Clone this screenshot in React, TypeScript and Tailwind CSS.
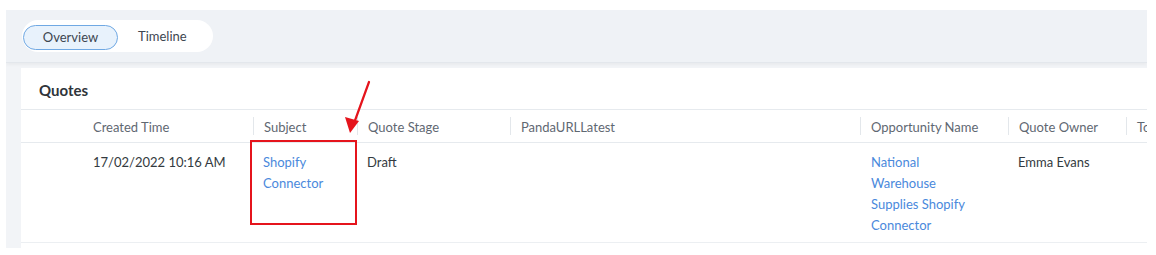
import React from "react";

const columns = [
  { label: "Created Time", width: "w-[232px]", first: true },
  { label: "Subject", width: "w-[104px]" },
  { label: "Quote Stage", width: "w-[153px]" },
  { label: "PandaURLLatest", width: "w-[350px]" },
  { label: "Opportunity Name", width: "w-[148px]" },
  { label: "Quote Owner", width: "w-[118px]" },
  { label: "Total", width: "w-[120px]" },
];

const App = () => {
  return (
    <div className="bg-white pl-[6px] pt-[10px] h-[255px] font-['Lato',sans-serif] text-[13px]">
      <div className="w-[1141px] h-[238px] bg-[#f2f4f7] overflow-hidden">
        <div className="h-[53px] pt-[10px] pl-[16px] bg-[#eff2f6] border-b border-[#e3e7ec] shadow-[0_2px_3px_rgba(0,0,0,0.04)]">
          <div className="inline-flex items-center h-[32px] w-[191px] rounded-full bg-white pl-[1px] pt-[2px]">
            <button className="h-[25px] w-[95px] rounded-full border border-[#6fa8e3] bg-[#e8f2fc] text-[#3d4650] leading-none">
              Overview
            </button>
            <span className="ml-[20px] text-[#3d4650]">Timeline</span>
          </div>
        </div>

        <div className="pl-[15px] pt-[5px]">
          <div className="relative bg-white w-[1300px] h-[200px]">
            <div className="h-[42px] border-b border-[#e6eaee] pl-[18px] pt-[3px] flex items-center text-[15px] font-bold text-[#2f343a]">
              Quotes
            </div>

            <div className="flex h-[33px] border-b border-[#e6eaee] text-[#5f6872]">
              {columns.map((c) => (
                <div key={c.label} className={`${c.width} shrink-0 flex items-center`}>
                  {c.first ? (
                    <span className="pl-[72px] pt-[3px]">{c.label}</span>
                  ) : (
                    <>
                      <div className="w-px h-[18px] bg-[#e3e7eb]" />
                      <span className="pl-[10px] pt-[3px]">{c.label}</span>
                    </>
                  )}
                </div>
              ))}
            </div>

            <div className="flex h-[100px] border-b border-[#eceff2] leading-[21px] text-[#333a40] pt-[9px]">
              <div className="w-[232px] shrink-0 pl-[72px]">17/02/2022 10:16 AM</div>
              <div className="relative w-[104px] shrink-0 pl-[10px] pr-[8px] text-[#4a89dc]">
                Shopify Connector
                <div className="absolute left-[-3px] top-[-12px] w-[107px] h-[85px] border-2 border-[#e5141c]" />
              </div>
              <div className="w-[153px] shrink-0 pl-[10px]">Draft</div>
              <div className="w-[350px] shrink-0" />
              <div className="w-[148px] shrink-0 pl-[11px] pr-[30px] text-[#4a89dc]">
                National Warehouse Supplies Shopify Connector
              </div>
              <div className="w-[118px] shrink-0 pl-[10px]">Emma Evans</div>
              <div className="w-[120px] shrink-0" />
            </div>

            <svg className="absolute left-[300px] top-[8px]" width="60" height="60" viewBox="0 0 60 60">
              <line x1="48" y1="6" x2="32" y2="50" stroke="#e5141c" strokeWidth="2.2" strokeLinecap="round" />
              <polygon points="29,57 24,41 38,45" fill="#e5141c" />
            </svg>
          </div>
        </div>
      </div>
    </div>
  );
};

export default App;
